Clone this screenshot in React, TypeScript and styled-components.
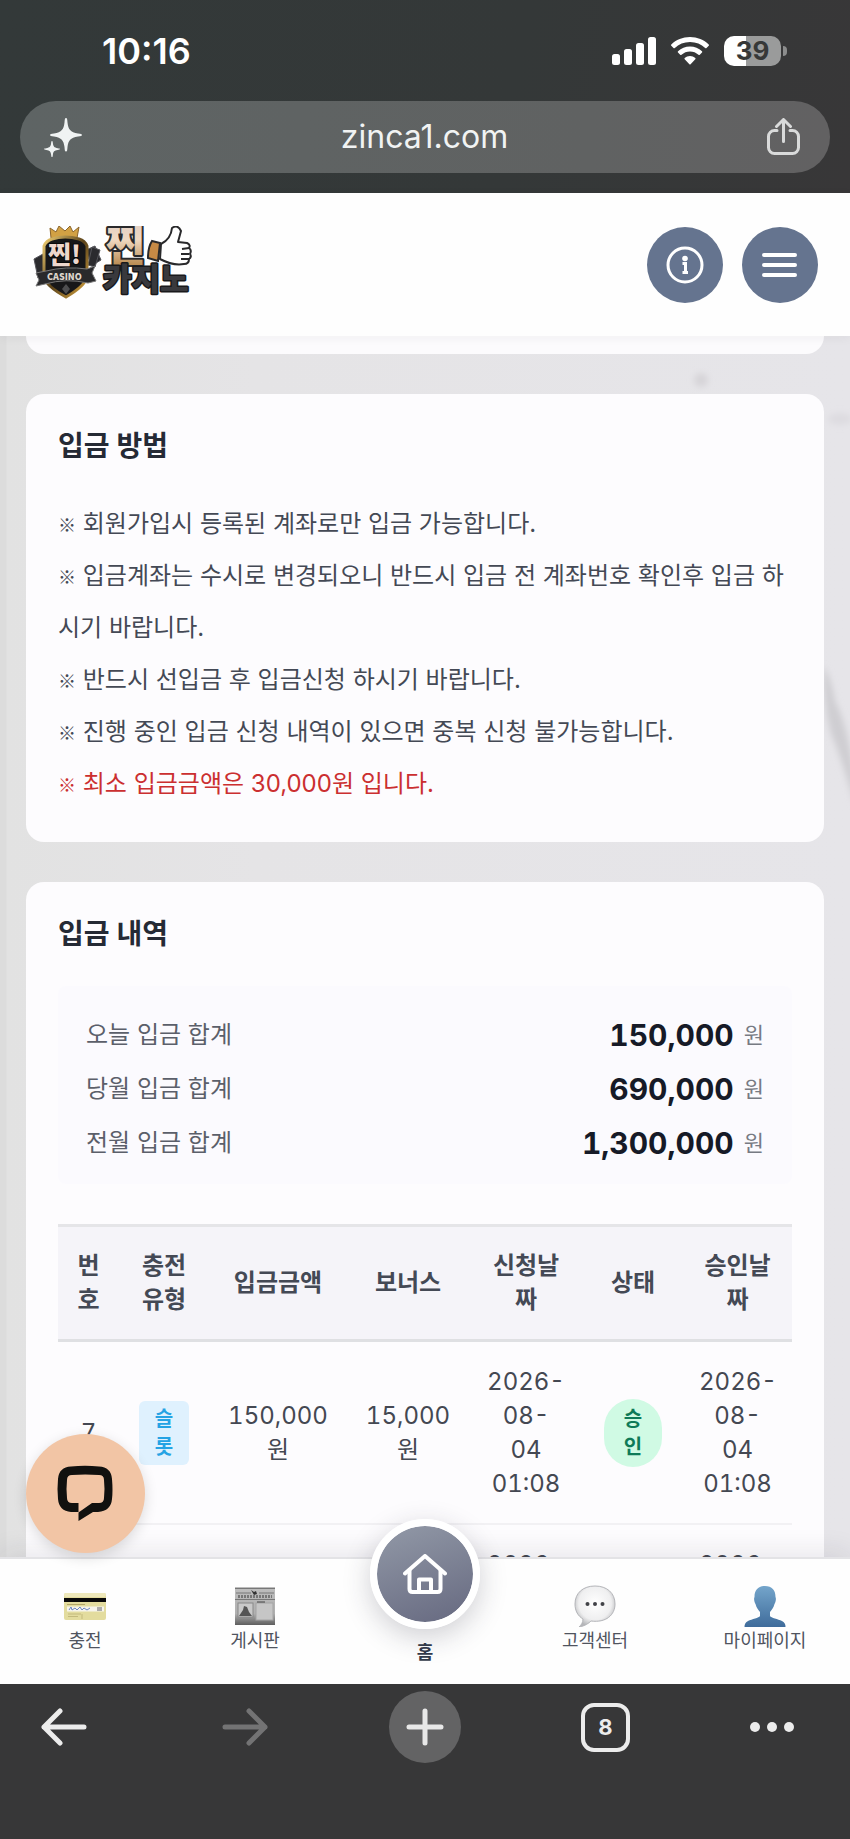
import React from "react";
import styled, { createGlobalStyle } from "styled-components";

const GlobalStyle = createGlobalStyle`
  *, *::before, *::after { box-sizing: border-box; }
  body { margin: 0; font-family: Inter, "Noto Sans CJK KR", sans-serif; color: #3f4451; }
  button { border: 0; padding: 0; margin: 0; background: none; font: inherit; color: inherit; cursor: pointer; }
  svg { display: block; flex: none; }
`;

const Screen = styled.div`
  display: flex;
  flex-direction: column;
  height: 100vh;
  overflow: hidden;
  background: #e5e4e7;
`;

/* Browser chrome, top */
const BrowserTop = styled.div`
  flex: none;
  padding: 0 20px 20px;
  background: linear-gradient(100deg, #333939 0%, #343838 60%, #383738 100%);
`;

const StatusBar = styled.div`
  display: flex;
  align-items: center;
  justify-content: space-between;
  height: 101px;
  padding: 0 44px 0 82px;
`;

const Clock = styled.time`
  color: #fff;
  font-size: 36px;
  font-weight: 600;
`;

const StatusIcons = styled.div`
  display: flex;
  align-items: center;
  gap: 15px;
`;

const Battery = styled.div`
  position: relative;
  display: flex;
  align-items: center;
  justify-content: center;
  width: 57px;
  height: 30px;
  margin-right: 5px;
  border-radius: 10px;
  background: linear-gradient(90deg, #fff 39%, #9a9b9b 39%);
  color: #363838;
  font-size: 26px;
  font-weight: 700;
  &::after {
    content: "";
    position: absolute;
    right: -6px;
    width: 4px;
    height: 10px;
    border-radius: 0 5px 5px 0;
    background: #8c8d8d;
  }
`;

const AddressBar = styled.div`
  display: flex;
  align-items: center;
  justify-content: space-between;
  height: 72px;
  padding: 0 30px 0 24px;
  border-radius: 36px;
  background: linear-gradient(90deg, #5e6464, #606262 70%, #626162);
  color: #f1f3f3;
  font-size: 32px;
  line-height: 36px;
`;

/* Site header */
const SiteHeader = styled.header`
  position: relative;
  z-index: 1;
  display: flex;
  flex: none;
  align-items: center;
  justify-content: space-between;
  height: 143px;
  padding: 0 32px 0 32px;
  background: #fefefe;
  box-shadow: 0 2px 10px rgba(40, 40, 60, 0.05);
`;

const HeaderActions = styled.div`
  display: flex;
  gap: 19px;
`;

const RoundButton = styled.button`
  display: flex;
  align-items: center;
  justify-content: center;
  width: 76px;
  height: 76px;
  border-radius: 50%;
  background: #65748f;
`;

const Content = styled.main`
  position: relative;
  flex: 1;
  min-height: 0;
  overflow: hidden;
  padding: 0 26px;
  background: linear-gradient(90deg, #dcdcdc 0, #dcdcdc 6px, #e2e2e2 7px, #e5e4e6 30%, #e6e5e9 100%);
`;

const Marble = styled.svg`
  position: absolute;
  top: 0;
  right: 0;
`;

const Card = styled.section`
  position: relative;
  padding: 32px;
  margin-bottom: 40px;
  border-radius: 18px;
  background: #fdfcfe;
`;

const CardTail = styled.div`
  position: relative;
  height: 18px;
  margin-bottom: 40px;
  border-radius: 0 0 18px 18px;
  background: #fcfbfd;
`;

const CardTitle = styled.h2`
  margin: 0 0 32px;
  color: #252a35;
  font-size: 28px;
  line-height: 40px;
  font-weight: 600;
`;

const Notes = styled.ul`
  margin: 0;
  padding: 0;
  list-style: none;
`;

const Note = styled.li<{ $warn?: boolean }>`
  color: ${(p) => (p.$warn ? "#cb2f30" : "#444955")};
  font-size: 24px;
  line-height: 52px;
`;

const Mark = styled.span`
  font-family: "Noto Sans CJK KR", sans-serif;
  font-size: 18px;
  line-height: 24px;
  font-weight: 600;
`;

const Summary = styled.dl`
  display: flex;
  flex-direction: column;
  gap: 20px;
  margin: 0 0 40px;
  padding: 32px 28px 24px;
  border-radius: 8px;
  background: #fbfafe;
`;

const SummaryRow = styled.div`
  display: flex;
  align-items: center;
  justify-content: space-between;
  font-size: 24px;
  line-height: 34px;
`;

const SummaryLabel = styled.dt`
  color: #5b5f6a;
`;

const SummaryValue = styled.dd`
  display: flex;
  align-items: center;
  gap: 10px;
  margin: 0;
  color: #161a27;
`;

const Amount = styled.strong`
  font-size: 30px;
  font-weight: 700;
  font-variant-numeric: tabular-nums;
`;

const Unit = styled.span`
  color: #777a83;
  font-size: 22px;
`;

const Table = styled.table`
  width: 100%;
  border-collapse: collapse;
  table-layout: fixed;
  font-size: 24px;
  line-height: 34px;
  text-align: center;
`;

const Col = styled.col<{ $width: number }>`
  width: ${(p) => p.$width}px;
`;

const HeadCell = styled.th`
  padding: 22px 16px 22px;
  border-top: 3px solid #e5e5e8;
  border-bottom: 3px solid #dfe0e3;
  background: #f5f4f9;
  color: #444955;
  font-weight: 600;
`;

const Cell = styled.td`
  padding: 23px 16px 22px;
  border-bottom: 2px solid #f2f1f4;
  color: #444852;
  font-variant-numeric: tabular-nums;
`;

const DateLine = styled.span`
  display: block;
`;

const Tag = styled.span<{ $pill?: boolean }>`
  display: inline-block;
  width: ${(p) => (p.$pill ? 58 : 50)}px;
  padding: ${(p) => (p.$pill ? "6px 18px" : "4px 14px")};
  border-radius: ${(p) => (p.$pill ? 29 : 6)}px;
  background: ${(p) => (p.$pill ? "#d0fae4" : "#dff1fe")};
  color: ${(p) => (p.$pill ? "#0f7a58" : "#25a3e4")};
  font-size: 20px;
  line-height: 28px;
  font-weight: 600;
  vertical-align: middle;
`;

/* Site tab bar */
const TabBar = styled.nav`
  position: relative;
  z-index: 2;
  display: flex;
  flex: none;
  height: 127px;
  border-top: 2px solid #e3e3e6;
  background: #fefefe;
  box-shadow: 0 -6px 24px rgba(30, 30, 50, 0.09);
`;

const TabItem = styled.a<{ $active?: boolean }>`
  display: flex;
  flex: 1 1 0;
  flex-direction: column;
  align-items: center;
  padding-top: ${(p) => (p.$active ? 80 : 26)}px;
  color: ${(p) => (p.$active ? "#333b4a" : "#50545e")};
  font-size: 18px;
  line-height: 28px;
  font-weight: ${(p) => (p.$active ? 700 : 400)};
  text-decoration: none;
`;

const HomeDisc = styled.span`
  position: absolute;
  top: -40px;
  left: calc(50% - 55px);
  display: flex;
  align-items: center;
  justify-content: center;
  width: 110px;
  height: 110px;
  border: 7px solid #fff;
  border-radius: 50%;
  background: linear-gradient(160deg, #9299a7, #666980) padding-box;
  box-shadow: 0 8px 28px rgba(40, 40, 60, 0.22);
`;

const ChatButton = styled.button`
  position: absolute;
  left: 26px;
  bottom: 131px;
  display: flex;
  align-items: center;
  justify-content: center;
  width: 119px;
  height: 119px;
  border-radius: 50%;
  background: #f2c5a5;
  box-shadow: 0 4px 14px rgba(0, 0, 0, 0.14);
`;

/* Browser chrome, bottom */
const BrowserBottom = styled.div`
  position: relative;
  z-index: 3;
  display: flex;
  flex: none;
  justify-content: space-between;
  padding: 7px 56px 76px 28px;
  background: #373738;
`;

const ToolButton = styled.button<{ $filled?: boolean; $width?: number }>`
  display: flex;
  align-items: center;
  justify-content: center;
  width: ${(p) => p.$width ?? 72}px;
  height: 72px;
  border-radius: 36px;
  background: ${(p) => (p.$filled ? "#636364" : "transparent")};
`;

const TabCount = styled.span`
  display: flex;
  align-items: center;
  justify-content: center;
  width: 49px;
  height: 49px;
  border: 4px solid #ececec;
  border-radius: 13px;
  color: #ececec;
  font-size: 22px;
  font-weight: 700;
`;

const Signal = () => (
  <svg width="44" height="28" viewBox="0 0 44 28" fill="#fff">
    <rect x="0" y="17" width="8" height="11" rx="2.5" />
    <rect x="12" y="12" width="8" height="16" rx="2.5" />
    <rect x="24" y="6" width="8" height="22" rx="2.5" />
    <rect x="36" y="0" width="8" height="28" rx="2.5" />
  </svg>
);

const Wifi = () => (
  <svg width="38" height="28" viewBox="0 0 38 28" fill="#fff">
    <path d="M19 0C11.700 0 5 2.800.3 7.500c-.4.400-.4.900 0 1.300l2.200 2.200c.4.400.9.400 1.300 0C7.700 7.200 13 5 19 5s11.300 2.200 15.200 6c.4.400.9.400 1.300 0l2.200-2.200c.4-.4.400-.9 0-1.300C33 2.800 26.300 0 19 0Z" />
    <path d="M19 9.500c-4.600 0-8.800 1.800-12 4.800-.4.400-.4.900 0 1.300l2.200 2.200c.4.400.9.400 1.300 0 2.300-2.100 5.300-3.300 8.500-3.300s6.200 1.200 8.500 3.300c.4.400.9.400 1.300 0l2.200-2.200c.4-.4.400-.9 0-1.300-3.200-3-7.400-4.800-12-4.800Z" />
    <path d="M19 19c-2 0-3.900.8-5.300 2-.4.400-.4.900 0 1.300l4.700 4.900c.4.400.8.400 1.200 0l4.700-4.900c.4-.4.400-.9 0-1.300-1.400-1.200-3.300-2-5.300-2Z" />
  </svg>
);

const Sparkles = () => (
  <svg width="38" height="39" viewBox="0 0 38 39" fill="#f0f3f3">
    <path d="M22 0c1.300 0 1.200 1.500 1.500 4.500.8 7 2.800 9.600 10.500 11 2.800.5 4 .6 4 1.500s-1.200 1-4 1.500c-7.700 1.400-9.700 4-10.500 10.500-.3 3-.2 4.500-1.500 4.500s-1.200-1.500-1.500-4.500C19.700 22.500 17.700 19.900 10 18.500 7.200 18 6 17.900 6 17s1.200-1 4-1.500c7.700-1.400 9.700-4 10.500-11C20.800 1.500 20.700 0 22 0Z" />
    <path d="M8 23c.7 0 .7.800.9 2.300.4 3.300 1.300 4.300 4.800 4.900 1.500.3 2.300.3 2.300.9s-.8.700-2.300.9c-3.500.6-4.400 1.500-4.800 4.700C8.700 38.300 8.700 39 8 39s-.7-.7-.9-2.300C6.700 33.500 5.800 32.600 2.300 32 .8 31.800 0 31.700 0 31.100s.8-.6 2.300-.9c3.500-.6 4.400-1.600 4.800-4.900C7.300 23.800 7.300 23 8 23Z" />
  </svg>
);

const Share = () => (
  <svg width="33" height="38" viewBox="0 0 33 38" fill="none" stroke="#d9dada" strokeWidth="3" strokeLinecap="round" strokeLinejoin="round">
    <path d="M10 12.500H7.500a6 6 0 0 0-6 6v11a6 6 0 0 0 6 6h18a6 6 0 0 0 6-6v-11a6 6 0 0 0-6-6H23" />
    <path d="M16.500 23.500V2M9.500 8.500l7-7 7 7" />
  </svg>
);

const LogoText = styled.text`
  font-family: "Noto Sans CJK KR", sans-serif;
  font-weight: 900;
  paint-order: stroke;
  stroke-linejoin: round;
`;

const Logo = () => (
  <svg width="162" height="78" viewBox="0 0 162 78" role="img" aria-label="찐카지노">
    <defs>
      <linearGradient id="gold" x1="0" y1="0" x2="0" y2="1">
        <stop offset="0" stopColor="#d9c9c5" />
        <stop offset=".45" stopColor="#f0d9c2" />
        <stop offset="1" stopColor="#a8732f" />
      </linearGradient>
      <linearGradient id="rim" x1="0" y1="0" x2="1" y2="1">
        <stop offset="0" stopColor="#f1cf73" />
        <stop offset=".5" stopColor="#5b431a" />
        <stop offset="1" stopColor="#d9a640" />
      </linearGradient>
    </defs>
    <g fill="#2b2b2e" stroke="#55555a">
      <path d="m2 33 9-5 4 19-9 5Z" />
      <path d="m54 24 9-4 6 14-10 6Z" />
      <path d="m60 21 8 3-5 17-7-2Z" />
    </g>
    <path d="M19 12 18 2l6 4 3-6 6 5 5-5 3 6 6-5-2 11Z" fill="#d2a144" stroke="#8a642a" />
    <path d="M12 20q2-5 8-7 13-4 27 0 6 2 8 7v31q-2 9-21 20Q14 60 12 51Z" fill="#171719" stroke="url(#rim)" strokeWidth="3" />
    <LogoText x="16" y="38" fontSize="25" fill="#eed7cd" stroke="#090909" strokeWidth="2">찐!</LogoText>
    <path d="m4 47 10-2q20-5 41-2l8-3-3 7 4 8-8 2q-22-5-43 1l-9 2 3-6Z" fill="#29292b" stroke="#777" />
    <LogoText x="15" y="54" fontSize="9" fill="#ddd5cc">CASINO</LogoText>
    <path d="m34 58 4 5-4 5-4-5Z" fill="#4e4e50" />
    <LogoText x="74" y="35" fontSize="42" fill="url(#gold)" stroke="#29292b" strokeWidth="4">찐</LogoText>
    <LogoText x="71" y="64" fontSize="31" fill="#39393d" stroke="#19191b" strokeWidth="3">카지노</LogoText>
    <path d="m120 15 8 2-2 18-10-3q0-11 4-17Z" fill="#c78a45" stroke="#29292b" strokeWidth="2" />
    <path d="M129 18q10-5 11-16 6-4 9 3l-3 11 9 1q4 2 2 5 3 2 1 6 2 3-1 5 0 5-5 5-11 2-24-5Z" fill="#fff" stroke="#29292b" strokeWidth="2" strokeLinejoin="round" />
    <path d="m150 23 7-1M149 28l8 0M149 33l8 0" stroke="#29292b" strokeWidth="2" />
  </svg>
);

const InfoIcon = () => (
  <svg width="38" height="38" viewBox="0 0 38 38" fill="none" stroke="#fff" strokeWidth="3">
    <circle cx="19" cy="19" r="17" />
    <circle cx="19" cy="12.500" r="2.800" fill="#fff" stroke="none" />
    <path d="M16.500 17.500h3V27M16.500 26.500h5.500" />
  </svg>
);

const MenuIcon = () => (
  <svg width="36" height="26" viewBox="0 0 36 26" stroke="#fff" strokeWidth="4" strokeLinecap="round">
    <path d="M2 3h31M2 13h31M2 23h31" />
  </svg>
);

const ChatIcon = () => (
  <svg width="57" height="57" viewBox="0 0 57 57">
    <path fill="#11110f" fillRule="evenodd" d="M14 1.500Q28 0 42 1.500 54 2 55 14q1 12 0 20-1 12-14 13h-5L21.500 56V47H14Q2 46 1 34 0 24 1 14 2 2 14 1.500ZM15 10q13-1 27 0 5 0 5 5 1 9 0 18 0 5-5 5h-7L21.500 47.500V38H15q-5 0-5-5-1-9 0-18 0-5 5-5Z" />
  </svg>
);

const HomeIcon = () => (
  <svg width="44" height="40" viewBox="0 0 44 40" fill="none" stroke="#fff" strokeWidth="4" strokeLinecap="round" strokeLinejoin="round">
    <path d="M2 19.500 22 2l20 17.500" />
    <path d="M6.500 16v19q0 3 3 3h25q3 0 3-3V16" />
    <path d="M16 37V25.500h12V37" />
  </svg>
);

const CreditCardIcon = () => (
  <svg width="42" height="42" viewBox="0 0 42 42">
    <rect x="0" y="8" width="42" height="27" rx="2" fill="#e3dc9e" />
    <rect x="0" y="8" width="42" height="4" rx="2" fill="#eee8bb" />
    <rect x="0" y="13" width="42" height="4" fill="#090909" />
    <path d="M3 19.500h18" stroke="#b3a768" />
    <rect x="3" y="21.500" width="37" height="5" fill="#f7f5ec" />
    <path d="m5 25 2-3 1 3 3-2 2 2 3-3 2 3 2-2 3 2 3-2" fill="none" stroke="#6b86c4" />
    <path d="M33 23h5M33 25h5" stroke="#65656a" />
    <path d="M4 29h13M4 31.500h10M18 29v5" stroke="#c3ba7c" />
  </svg>
);

const NewspaperIcon = () => (
  <svg width="42" height="42" viewBox="0 0 42 42">
    <defs>
      <linearGradient id="paper" x1="0" y1="0" x2="0" y2="1">
        <stop offset="0" stopColor="#bdbdbd" />
        <stop offset=".7" stopColor="#b0b0b0" />
        <stop offset="1" stopColor="#5e5e5e" />
      </linearGradient>
    </defs>
    <rect x="1" y="2" width="40" height="38" fill="url(#paper)" />
    <path d="M1 3.500h40M2 8h15M25 8h15M1 14.500h40" stroke="#777" />
    <path d="m17 5 3 2 2-1 1 3-3 1Z" fill="#333" />
    <path d="M4 11.500h34" stroke="#777" strokeWidth="3" strokeDasharray="2 1" />
    <rect x="4" y="18" width="15" height="14" fill="#c9c9c9" stroke="#888" />
    <path d="m5 31 4-6 1-4 3 1 2 5 3 4Z" fill="#555" />
    <rect x="22" y="18" width="17" height="17" fill="#c6c6c6" stroke="#a4a4a4" />
    <path d="M23 17h8" stroke="#444" />
  </svg>
);

const SpeechIcon = () => (
  <svg width="42" height="42" viewBox="0 0 42 42">
    <defs>
      <radialGradient id="bubble" cx=".5" cy=".42" r=".58">
        <stop offset="0" stopColor="#fff" />
        <stop offset=".7" stopColor="#efeff0" />
        <stop offset="1" stopColor="#b5b6b9" />
      </radialGradient>
    </defs>
    <path d="M21 1C9 1 1 8 1 19c0 7 3 12 8 15 0 4-2 6-4 8 6-1 10-4 12-6 15 2 24-6 24-17S33 1 21 1Z" fill="url(#bubble)" stroke="#b4b5b9" />
    <g fill="#414247">
      <circle cx="13.500" cy="19" r="2" />
      <circle cx="21" cy="19" r="2" />
      <circle cx="28.500" cy="19" r="2" />
    </g>
  </svg>
);

const PersonIcon = () => (
  <svg width="42" height="42" viewBox="0 0 42 42">
    <defs>
      <linearGradient id="bust" x1="0" y1="0" x2="0" y2="1">
        <stop offset="0" stopColor="#74a5cb" />
        <stop offset="1" stopColor="#3f6c9b" />
      </linearGradient>
    </defs>
    <path d="M21 1C14 1 10.500 5 10.500 12c-1 2 0 5 1 7 1 4 3 6 4.500 8v4c-1 2-8 3-12 5-3 1.500-3.500 3.500-3.500 6h41c0-2.500-.5-4.500-3.500-6-4-2-11-3-12-5v-4c1.500-2 3.500-4 4.500-8 1-2 2-5 1-7C31.500 5 28 1 21 1Z" fill="url(#bust)" />
  </svg>
);

const Arrow = ({ forward }: { forward?: boolean }) => (
  <svg width="46" height="38" viewBox="0 0 46 38" fill="none" stroke={forward ? "#737374" : "#ececec"} strokeWidth="5" strokeLinecap="round" strokeLinejoin="round">
    <path d={forward ? "M3 19h40M27 3l16 16-16 16" : "M43 19H3M19 3 3 19l16 16"} />
  </svg>
);

const Plus = () => (
  <svg width="38" height="38" viewBox="0 0 38 38" stroke="#e8e8e8" strokeWidth="5" strokeLinecap="round">
    <path d="M19 3v32M3 19h32" />
  </svg>
);

const Dots = () => (
  <svg width="46" height="12" viewBox="0 0 46 12" fill="#ececec">
    <circle cx="6" cy="6" r="5" />
    <circle cx="23" cy="6" r="5" />
    <circle cx="40" cy="6" r="5" />
  </svg>
);

const notes = [
  "회원가입시 등록된 계좌로만 입금 가능합니다.",
  "입금계좌는 수시로 변경되오니 반드시 입금 전 계좌번호 확인후 입금 하시기 바랍니다.",
  "반드시 선입금 후 입금신청 하시기 바랍니다.",
  "진행 중인 입금 신청 내역이 있으면 중복 신청 불가능합니다.",
];

const totals = [
  ["오늘 입금 합계", "150,000"],
  ["당월 입금 합계", "690,000"],
  ["전월 입금 합계", "1,300,000"],
];

const columns: [string, number][] = [
  ["번호", 61],
  ["충전유형", 90],
  ["입금금액", 138],
  ["보너스", 122],
  ["신청날짜", 114],
  ["상태", 100],
  ["승인날짜", 109],
];

const rows = [
  { id: 7, kind: "슬롯", amount: "150,000원", bonus: "15,000원", date: ["2026-", "08-", "04", "01:08"], state: "승인" },
  { id: 6, kind: "슬롯", amount: "150,000원", bonus: "15,000원", date: ["2026-", "08-", "03", "01:08"], state: "승인" },
];

const DateCell = ({ parts }: { parts: string[] }) => (
  <Cell>
    {parts.map((part) => (
      <DateLine key={part}>{part}</DateLine>
    ))}
  </Cell>
);

export default function App() {
  return (
    <Screen>
      <GlobalStyle />
      <BrowserTop>
        <StatusBar>
          <Clock>10:16</Clock>
          <StatusIcons>
            <Signal />
            <Wifi />
            <Battery>39</Battery>
          </StatusIcons>
        </StatusBar>
        <AddressBar>
          <button aria-label="AI"><Sparkles /></button>
          <span>zinca1.com</span>
          <button aria-label="공유"><Share /></button>
        </AddressBar>
      </BrowserTop>

      <SiteHeader>
        <Logo />
        <HeaderActions>
          <RoundButton aria-label="안내"><InfoIcon /></RoundButton>
          <RoundButton aria-label="메뉴"><MenuIcon /></RoundButton>
        </HeaderActions>
      </SiteHeader>

      <Content>
        <Marble width="180" height="560" viewBox="0 0 180 560" aria-hidden="true">
          <defs>
            <filter id="soft" x="-50%" y="-50%" width="200%" height="200%">
              <feGaussianBlur stdDeviation="3" />
            </filter>
          </defs>
          <g filter="url(#soft)" fill="#cfced2">
            <circle cx="31" cy="44" r="7" fill="#d6d4d8" />
            <ellipse cx="170" cy="83" rx="12" ry="6" fill="#dddbe0" />
            <path d="M153 330q8 10 12 35 12 22 20 75v30q-14-50-24-72-8-30-8-68Z" />
          </g>
        </Marble>

        <CardTail />

        <Card>
          <CardTitle>입금 방법</CardTitle>
          <Notes>
            {notes.map((text) => (
              <Note key={text}>
                <Mark>※</Mark> {text}
              </Note>
            ))}
            <Note $warn>
              <Mark>※</Mark> 최소 입금금액은 30,000원 입니다.
            </Note>
          </Notes>
        </Card>

        <Card>
          <CardTitle>입금 내역</CardTitle>
          <Summary>
            {totals.map(([label, value]) => (
              <SummaryRow key={label}>
                <SummaryLabel>{label}</SummaryLabel>
                <SummaryValue>
                  <Amount>{value}</Amount>
                  <Unit>원</Unit>
                </SummaryValue>
              </SummaryRow>
            ))}
          </Summary>
          <Table>
            <colgroup>
              {columns.map(([name, width]) => (
                <Col key={name} $width={width} />
              ))}
            </colgroup>
            <thead>
              <tr>
                {columns.map(([name]) => (
                  <HeadCell key={name} scope="col">{name}</HeadCell>
                ))}
              </tr>
            </thead>
            <tbody>
              {rows.map((row) => (
                <tr key={row.id}>
                  <Cell>{row.id}</Cell>
                  <Cell><Tag>{row.kind}</Tag></Cell>
                  <Cell>{row.amount}</Cell>
                  <Cell>{row.bonus}</Cell>
                  <DateCell parts={row.date} />
                  <Cell><Tag $pill>{row.state}</Tag></Cell>
                  <DateCell parts={row.date} />
                </tr>
              ))}
            </tbody>
          </Table>
        </Card>
      </Content>

      <TabBar>
        <TabItem href="#charge"><CreditCardIcon />충전</TabItem>
        <TabItem href="#board"><NewspaperIcon />게시판</TabItem>
        <TabItem href="#home" $active>
          <HomeDisc><HomeIcon /></HomeDisc>
          홈
        </TabItem>
        <TabItem href="#support"><SpeechIcon />고객센터</TabItem>
        <TabItem href="#mypage"><PersonIcon />마이페이지</TabItem>
        <ChatButton aria-label="채팅 상담"><ChatIcon /></ChatButton>
      </TabBar>

      <BrowserBottom>
        <ToolButton aria-label="뒤로"><Arrow /></ToolButton>
        <ToolButton aria-label="앞으로"><Arrow forward /></ToolButton>
        <ToolButton aria-label="새 탭" $filled><Plus /></ToolButton>
        <ToolButton aria-label="탭 목록"><TabCount>8</TabCount></ToolButton>
        <ToolButton aria-label="더보기" $width={44}><Dots /></ToolButton>
      </BrowserBottom>
    </Screen>
  );
}
